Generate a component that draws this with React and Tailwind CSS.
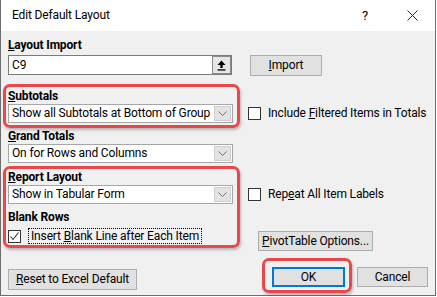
import React from "react";

const Chevron = () => (
  <svg width="9" height="5" viewBox="0 0 9 5" className="block">
    <path d="M0.5 0.5 L4.5 4.5 L8.5 0.5" fill="none" stroke="#707070" strokeWidth="1" />
  </svg>
);

const Select = ({ value }) => (
  <div className="w-[225px] h-[19px] bg-white border border-[#a6a6a6] flex items-center shrink-0">
    <span className="pl-[3px] leading-[17px] whitespace-nowrap overflow-hidden flex-1">{value}</span>
    <div className="w-[17px] h-[15px] mr-[1px] bg-[#e3e3e3] border border-[#cfcfcf] flex items-center justify-center shrink-0">
      <Chevron />
    </div>
  </div>
);

const Box = ({ checked }) => (
  <div className="w-[13px] h-[13px] bg-white border border-[#333333] flex items-center justify-center shrink-0">
    {checked && (
      <svg width="11" height="11" viewBox="0 0 11 11" className="block">
        <path d="M1.5 5.5 L4 8.5 L9.5 1.5" fill="none" stroke="#333333" strokeWidth="1.1" />
      </svg>
    )}
  </div>
);

const Btn = ({ children, className = "" }) => (
  <div className={"bg-[#e1e1e1] border border-[#adadad] flex items-center justify-center leading-[15px] whitespace-nowrap shrink-0 " + className}>
    {children}
  </div>
);

const Label = ({ children, className = "" }) => (
  <div className={"h-[15px] leading-[15px] font-bold shrink-0 " + className}>{children}</div>
);

export default function App() {
  return (
    <div className="relative w-[437px] h-[297px] bg-white font-['Roboto',sans-serif] text-[12px] tracking-[-0.15px] text-black">
      <div className="w-[436px] h-[296px] bg-[#f0f0f0] border-x border-b border-[#6e6e6e] flex flex-col">
        <div className="h-[31px] bg-white flex items-center pl-[11px] shrink-0">
          <span className="leading-[15px]">Edit Default Layout</span>
          <span className="ml-auto mr-[39px] text-[13px] leading-[15px]">?</span>
          <svg width="11" height="11" viewBox="0 0 11 11" className="mr-[17px] block">
            <path d="M0.5 0.5 L10.5 10.5 M10.5 0.5 L0.5 10.5" stroke="#222" strokeWidth="1" />
          </svg>
        </div>

        <div className="flex flex-col pl-[7px] pr-[7px]">
          <Label className="mt-[7px]"><span className="underline">L</span>ayout Import</Label>

          <div className="mt-[2px] flex items-start h-[21px] shrink-0">
            <div className="w-[224px] h-[20px] bg-white border border-[#7a7a7a] flex items-center">
              <span className="pl-[3px] leading-[15px] flex-1">C9</span>
              <div className="w-[19px] h-[18px] bg-[#e6e6e6] border border-[#8a8a8a] flex items-center justify-center">
                <svg width="9" height="11" viewBox="0 0 9 11" className="block">
                  <path d="M4.5 0.5 L8.5 5 L5.7 5 L5.7 8 L3.3 8 L3.3 5 L0.5 5 Z" fill="#000" />
                  <rect x="0.5" y="9.3" width="8" height="1.3" fill="#000" />
                </svg>
              </div>
            </div>
            <Btn className="ml-[18px] w-[72px] h-[21px]"><span><span className="underline">I</span>mport</span></Btn>
          </div>

          <Label className="mt-[13px]"><span className="underline">S</span>ubtotals</Label>
          <div className="flex items-center h-[19px] shrink-0">
            <Select value="Show all Subtotals at Bottom of Group" />
            <div className="ml-[15px] flex items-center whitespace-nowrap">
              <Box />
              <span className="ml-[7px] leading-[15px]">Include <span className="underline">F</span>iltered Items in Totals</span>
            </div>
          </div>

          <Label className="mt-[6px]"><span className="underline">G</span>rand Totals</Label>
          <Select value="On for Rows and Columns" />

          <Label className="mt-[7px]"><span className="underline">R</span>eport Layout</Label>
          <div className="flex items-center h-[19px] shrink-0">
            <Select value="Show in Tabular Form" />
            <div className="ml-[15px] flex items-center whitespace-nowrap">
              <Box />
              <span className="ml-[7px] leading-[15px]">Rep<span className="underline">e</span>at All Item Labels</span>
            </div>
          </div>

          <Label className="mt-[6px]">Blank Rows</Label>
          <div className="mt-[3px] flex items-start h-[23px] shrink-0">
            <div className="w-[225px] h-[16px] flex items-center shrink-0">
              <Box checked />
              <span className="ml-[7px] border border-dotted border-black px-[2px] leading-[14px] whitespace-nowrap">Insert <span className="underline">B</span>lank Line after Each Item</span>
            </div>
            <Btn className="ml-[25px] mt-[3px] w-[115px] h-[20px]"><span><span className="underline">P</span>ivotTable Options...</span></Btn>
          </div>

          <div className="mt-[16px] flex items-start h-[23px] shrink-0">
            <Btn className="mt-[2px] w-[129px] h-[21px]"><span><span className="underline">R</span>eset to Excel Default</span></Btn>
            <div className="ml-auto w-[73px] h-[20px] bg-[#e1e1e1] border border-[#0078d7] shadow-[inset_0_0_0_1px_#0078d7] flex items-center justify-center leading-[15px] shrink-0">OK</div>
            <Btn className="ml-[12px] w-[71px] h-[20px]">Cancel</Btn>
          </div>
        </div>
      </div>

      <div className="absolute left-[3px] top-[84px] w-[237px] h-[44px] border-[3px] border-[#e8474c] rounded-[7px] shadow-[1px_2px_3px_rgba(0,0,0,0.25)]" />
      <div className="absolute left-[3px] top-[166px] w-[237px] h-[82px] border-[3px] border-[#e8474c] rounded-[7px] shadow-[1px_2px_3px_rgba(0,0,0,0.25)]" />
      <div className="absolute left-[262px] top-[258px] w-[90px] h-[35px] border-[3px] border-[#e8474c] rounded-[7px] shadow-[1px_2px_3px_rgba(0,0,0,0.25)]" />
    </div>
  );
}
